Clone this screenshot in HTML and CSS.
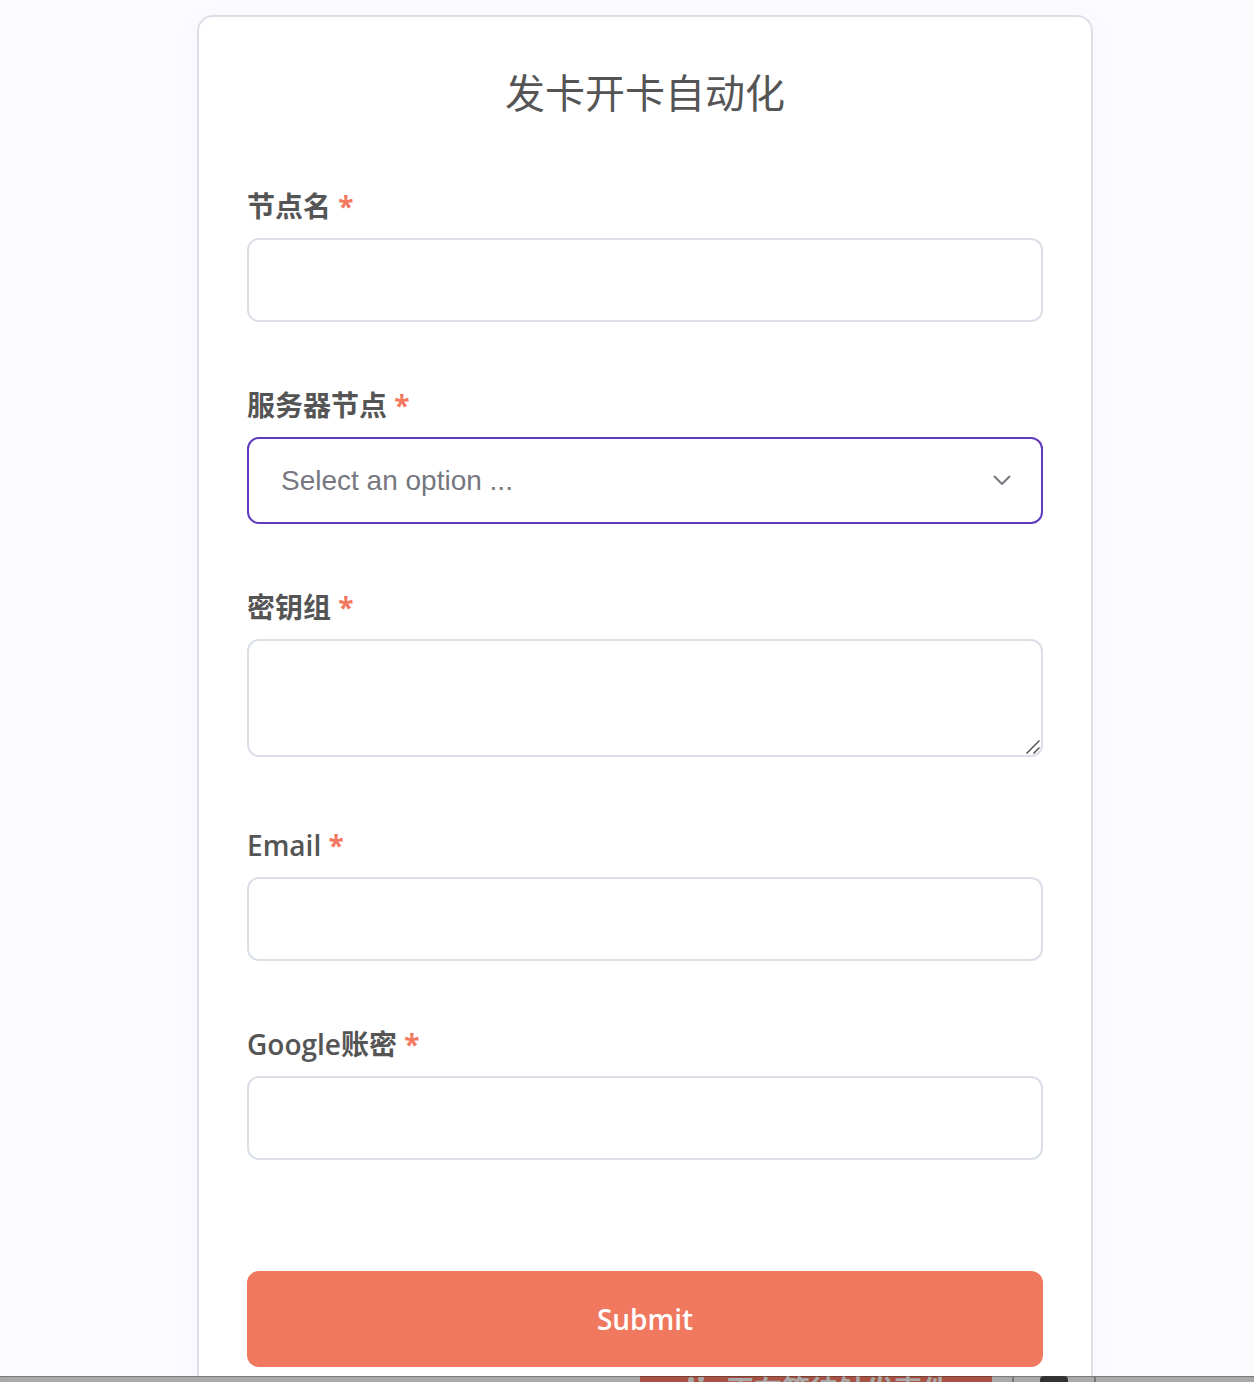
FILE: index.html
```html
<!DOCTYPE html>
<html lang="zh-CN">
<head>
<meta charset="utf-8">
<meta name="viewport" content="width=device-width, initial-scale=1">
<title>发卡开卡自动化</title>
<link rel="stylesheet" href="styles.css">
</head>
<body>
<main class="viewport">
  <form class="card">
    <h1 class="title">发卡开卡自动化</h1>
    <div class="field">
      <label class="label" for="node-name">节点名 <span class="required">*</span></label>
      <input class="control" id="node-name" type="text" required>
    </div>
    <div class="field">
      <label class="label" for="server-node">服务器节点 <span class="required">*</span></label>
      <div class="control-wrap">
        <select class="control control-select" id="server-node" required>
          <option value="">Select an option ...</option>
        </select>
        <svg class="chevron" viewBox="0 0 18 10" aria-hidden="true"><path d="M1 1l8 8 8-8"/></svg>
      </div>
    </div>
    <div class="field field-area">
      <label class="label" for="keys">密钥组 <span class="required">*</span></label>
      <div class="control-wrap">
        <textarea class="control control-area" id="keys" required></textarea>
        <svg class="grip" viewBox="0 0 14 14" aria-hidden="true"><path d="M0.500 13.500l13-13M7.500 13.500l6-6"/></svg>
      </div>
    </div>
    <div class="field">
      <label class="label" for="email">Email <span class="required">*</span></label>
      <input class="control" id="email" type="email" required>
    </div>
    <div class="field">
      <label class="label" for="google">Google账密 <span class="required">*</span></label>
      <input class="control" id="google" type="text" required>
    </div>
    <button class="submit" type="submit">Submit</button>
  </form>
</main>
<footer class="canvas-bar">
  <button class="listening" type="button">
    <svg class="spinner" viewBox="0 0 20 20" aria-hidden="true"><circle cx="5" cy="3" r="3"/><circle cx="15" cy="2" r="3"/></svg>
    <span>正在等待触发事件</span>
  </button>
  <div class="tool"><span class="tool-icon"></span></div>
</footer>
</body>
</html>
```
FILE: styles.css
```css
* {
  box-sizing: border-box;
}

body {
  margin: 0;
  height: 100vh;
  display: flex;
  flex-direction: column;
  overflow: hidden;
  background: #fcfcfe;
  color: #555;
  font-family: "Open Sans", "Noto Sans CJK SC", sans-serif;
}

.viewport {
  flex: 1;
  min-height: 0;
  overflow: hidden;
  padding: 15px 0 0 36px;
}

.card {
  max-width: 896px;
  margin: 0 auto;
  padding: 48px 48px 80px;
  background: #fff;
  border: 2px solid #dbdfe7;
  border-radius: 16px;
  box-shadow: 0 8px 32px rgba(99, 77, 255, 0.06);
}

.title {
  margin: 0 0 65px;
  font-size: 40px;
  line-height: 56px;
  font-weight: 400;
  text-align: center;
}

.field {
  margin-bottom: 63px;
}

.field-area {
  margin-bottom: 68px;
}

.label {
  display: block;
  margin-bottom: 12px;
  font-size: 28px;
  line-height: 40px;
  font-weight: 600;
}

.required {
  color: #f2785f;
  font-weight: 700;
}

.control {
  display: block;
  width: 100%;
  height: 84px;
  padding: 0 32px;
  background: #fff;
  border: 2px solid #dbdfe7;
  border-radius: 12px;
  outline: none;
  font-family: "Liberation Sans", "Noto Sans CJK SC", sans-serif;
  font-size: 28px;
  color: #77787f;
}

.control-wrap {
  position: relative;
}

.control-select {
  height: 87px;
  appearance: none;
  border-color: #613bbd;
}

.control-area {
  height: 118px;
  padding: 24px 32px;
  resize: none;
}

.chevron,
.grip {
  position: absolute;
  fill: none;
  pointer-events: none;
}

.chevron {
  right: 32px;
  top: 38px;
  width: 18px;
  height: 10px;
  stroke: #77787f;
  stroke-width: 2;
}

.grip {
  right: 3px;
  bottom: 3px;
  width: 14px;
  height: 14px;
  stroke: #555;
  stroke-width: 1.5;
}

.submit {
  display: block;
  width: 100%;
  height: 96px;
  margin-top: 111px;
  border: 0;
  border-radius: 12px;
  background: #f0785f;
  color: #fff;
  font: inherit;
  font-size: 28px;
  font-weight: 600;
}

.canvas-bar {
  flex: none;
  display: flex;
  gap: 20px;
  height: 6px;
  padding-left: 640px;
  overflow: hidden;
  background: #aaa;
  box-shadow: inset 0 1px 1px #777;
}

.listening {
  display: flex;
  align-items: flex-start;
  justify-content: center;
  gap: 20px;
  width: 352px;
  height: 64px;
  padding: 0 0 0 4px;
  border: 0;
  border-top: 1px solid #764036;
  background: #a75242;
  color: #aaa;
  font: inherit;
  font-size: 28px;
  font-weight: 600;
  line-height: 26px;
}

.spinner {
  width: 20px;
  height: 20px;
  fill: #aaa;
}

.tool {
  display: flex;
  justify-content: center;
  width: 84px;
  height: 64px;
  border: solid #77777f;
  border-width: 0 2px;
}

.tool-icon {
  width: 28px;
  height: 28px;
  border-radius: 4px;
  background: #333;
}
```
